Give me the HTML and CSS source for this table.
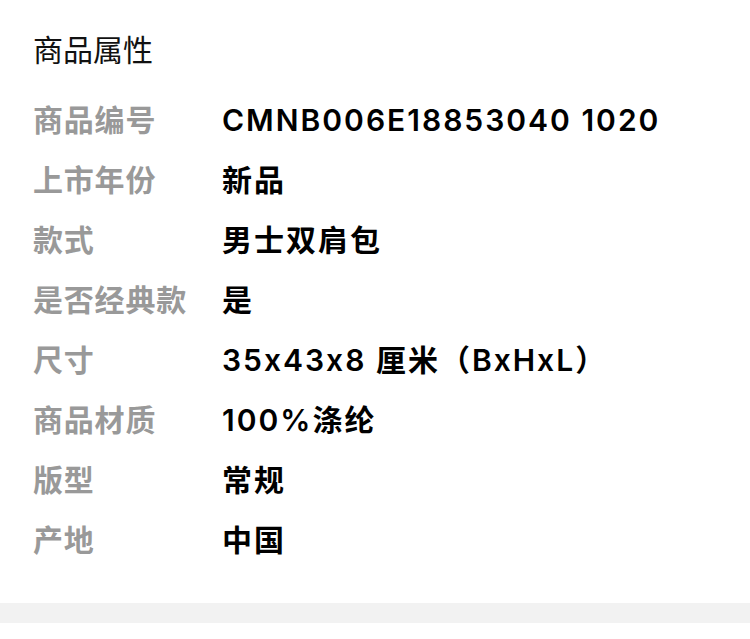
FILE: index.html
```html
<!DOCTYPE html>
<html lang="zh-CN">
<head>
    <meta charset="UTF-8">
    <meta name="viewport" content="width=device-width, initial-scale=1.0">
    <title>商品属性</title>
    <link rel="stylesheet" href="styles.css">
</head>
<body>
    <section class="attrs">
        <h2 class="attrs-title">商品属性</h2>
        <dl class="attr-list">
            <dt>商品编号</dt>
            <dd>CMNB006E18853040 1020</dd>
            <dt>上市年份</dt>
            <dd>新品</dd>
            <dt>款式</dt>
            <dd>男士双肩包</dd>
            <dt>是否经典款</dt>
            <dd>是</dd>
            <dt>尺寸</dt>
            <dd>35x43x8 厘米（BxHxL）</dd>
            <dt>商品材质</dt>
            <dd>100%涤纶</dd>
            <dt>版型</dt>
            <dd>常规</dd>
            <dt>产地</dt>
            <dd>中国</dd>
        </dl>
    </section>
    <div class="divider"></div>
</body>
</html>
```

FILE: styles.css
```css
body {
    margin: 0;
    background: #ffffff;
    color: #000000;
    font-family: Inter, "Noto Sans CJK SC", sans-serif;
    font-feature-settings: "calt" 0;
}

.attrs {
    padding: 30px 33px 33px;
}

.attrs-title {
    margin: 0 0 20px;
    font-size: 30px;
    font-weight: 400;
    line-height: 40px;
    color: #111111;
}

.attr-list {
    display: grid;
    grid-template-columns: 189px 1fr;
    margin: 0;
    font-size: 30px;
    line-height: 60px;
}

.attr-list dt {
    color: #999999;
    font-weight: 700;
    letter-spacing: 0.8px;
    white-space: nowrap;
}

.attr-list dd {
    margin: 0;
    font-weight: 600;
    letter-spacing: 2px;
    white-space: nowrap;
}

.divider {
    height: 20px;
    background: #f2f2f2;
}
```
